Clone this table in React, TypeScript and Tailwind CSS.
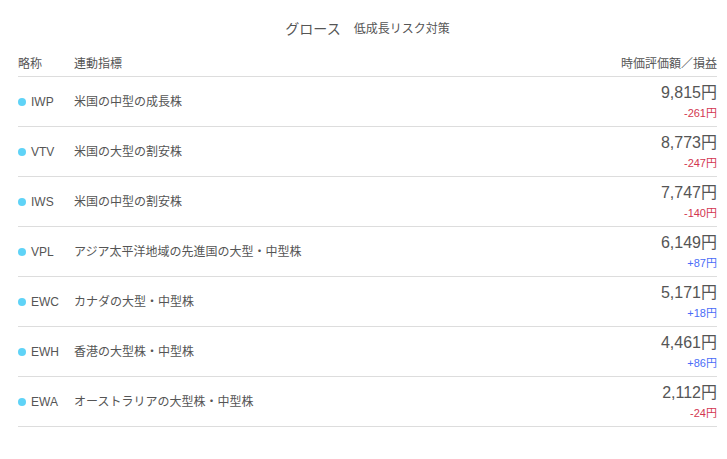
import React from 'react';

type Fund = {
  ticker: string;
  name: string;
  value: string;
  change: string;
};

const funds: Fund[] = [
  { ticker: 'IWP', name: '米国の中型の成長株', value: '9,815円', change: '-261円' },
  { ticker: 'VTV', name: '米国の大型の割安株', value: '8,773円', change: '-247円' },
  { ticker: 'IWS', name: '米国の中型の割安株', value: '7,747円', change: '-140円' },
  { ticker: 'VPL', name: 'アジア太平洋地域の先進国の大型・中型株', value: '6,149円', change: '+87円' },
  { ticker: 'EWC', name: 'カナダの大型・中型株', value: '5,171円', change: '+18円' },
  { ticker: 'EWH', name: '香港の大型株・中型株', value: '4,461円', change: '+86円' },
  { ticker: 'EWA', name: 'オーストラリアの大型株・中型株', value: '2,112円', change: '-24円' },
];

export default function App() {
  return (
    <div className="w-[727px] h-[459px] bg-white text-[#555] pl-[18px] pr-[10px] font-['Liberation_Sans','Noto_Sans_CJK_JP',sans-serif]">
      {/* Title */}
      <div className="h-[58px] flex items-center justify-center gap-[13px]">
        <span className="text-[14px] leading-[14px] text-[#555]">グロース</span>
        <span className="text-[12px] leading-[12px] text-[#555]">低成長リスク対策</span>
      </div>

      {/* Table header */}
      <div className="flex items-start text-[12px] leading-[12px] pb-[6px] border-b border-[#dddddd]">
        <span className="w-[56px]">略称</span>
        <span className="flex-1">連動指標</span>
        <span>時価評価額／損益</span>
      </div>

      {/* Rows */}
      {funds.map((fund) => {
        const up = fund.change.startsWith('+');
        return (
          <div key={fund.ticker} className="h-[50px] flex items-center border-b border-[#dddddd]">
            <div className="w-[56px] flex items-center">
              <span className="w-[8px] h-[8px] rounded-full bg-[#5fd3f7] mr-[5px]" />
              <span className="text-[12px] leading-[12px]">{fund.ticker}</span>
            </div>
            <span className="flex-1 text-[12px] leading-[12px]">{fund.name}</span>
            <div className="flex flex-col items-end pt-[0px]">
              <span className="text-[16px] leading-[18px] text-[#555]">{fund.value}</span>
              <span className={`text-[11px] leading-[14px] mt-[4px] ${up ? 'text-[#4a6cf7]' : 'text-[#d3364f]'}`}>
                {fund.change}
              </span>
            </div>
          </div>
        );
      })}
    </div>
  );
}
